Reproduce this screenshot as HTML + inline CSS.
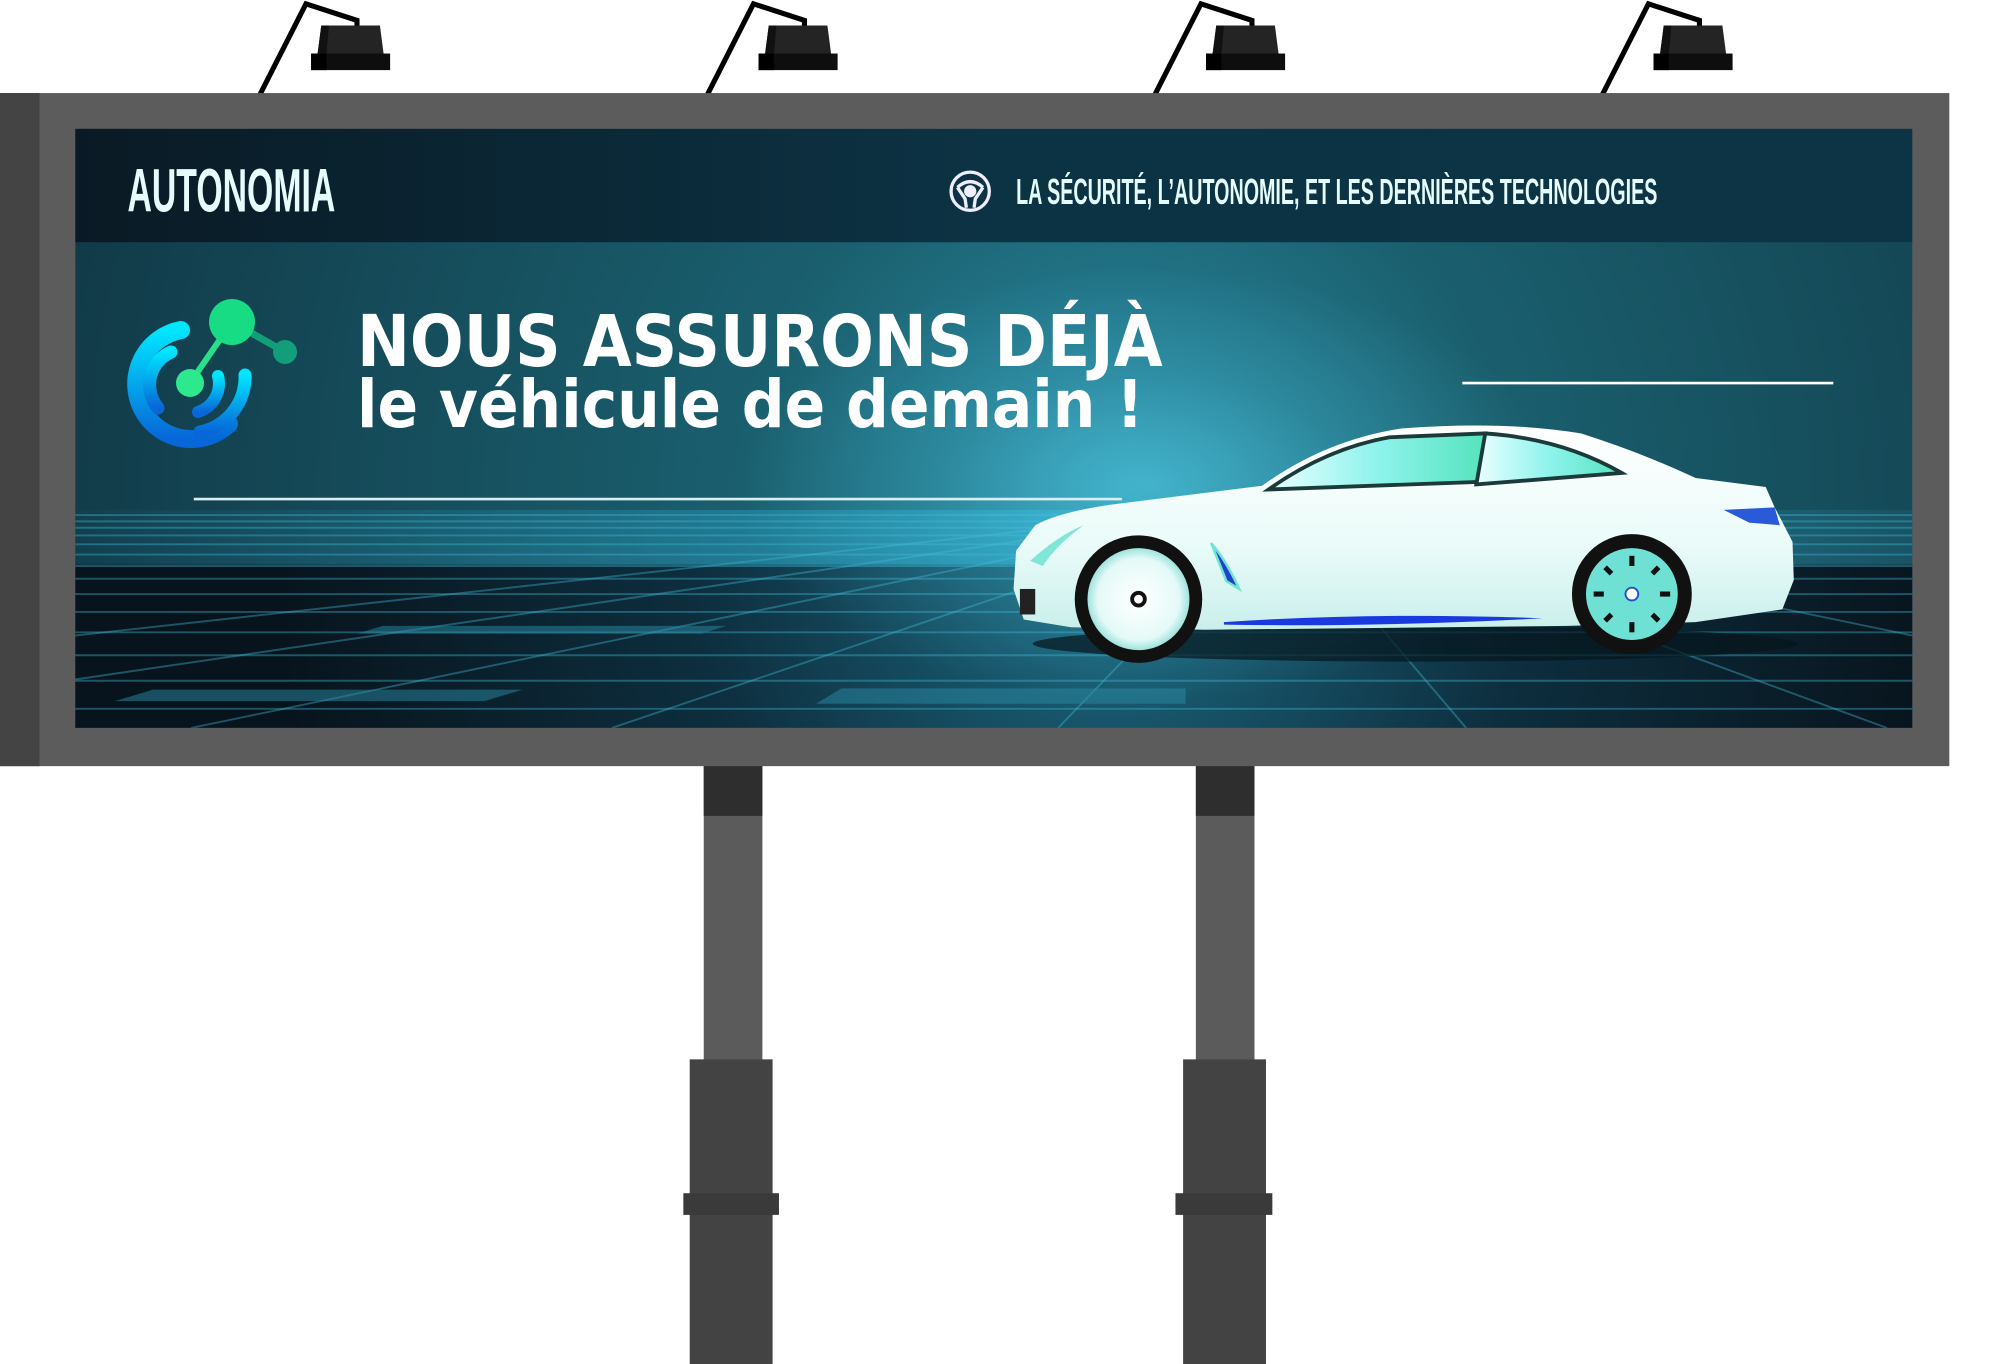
<!DOCTYPE html>
<html><head><meta charset="utf-8"><style>
html,body{margin:0;padding:0;background:#fff;width:1999px;height:1364px;overflow:hidden}
svg{display:block}
</style></head><body>
<svg width="1999" height="1364" viewBox="0 0 1999 1364" xmlns="http://www.w3.org/2000/svg">
<defs>
<linearGradient id="hdr" x1="0" y1="0" x2="1" y2="0"><stop offset="0" stop-color="#0a1a25"/><stop offset="0.5" stop-color="#0c3344"/><stop offset="1" stop-color="#0d3444"/></linearGradient>
<radialGradient id="sky" cx="880" cy="390" r="850" gradientUnits="userSpaceOnUse"><stop offset="0" stop-color="#2a8ca4"/><stop offset="0.35" stop-color="#1a5f6e"/><stop offset="1" stop-color="#113a48"/></radialGradient>
<linearGradient id="floorU" x1="0" y1="0" x2="1" y2="0"><stop offset="0" stop-color="#123f4e"/><stop offset="0.55" stop-color="#2aa0c0"/><stop offset="1" stop-color="#1a5566"/></linearGradient>
<radialGradient id="floorD" cx="870" cy="450" r="650" gradientUnits="userSpaceOnUse"><stop offset="0" stop-color="#1d6a82"/><stop offset="0.5" stop-color="#0d2e3e"/><stop offset="1" stop-color="#08141d"/></radialGradient>
<radialGradient id="glow" cx="0.5" cy="0.5" r="0.5"><stop offset="0" stop-color="#57d4ee" stop-opacity="0.55"/><stop offset="0.5" stop-color="#57d4ee" stop-opacity="0.2"/><stop offset="1" stop-color="#57d4ee" stop-opacity="0"/></radialGradient>
<linearGradient id="blueg" x1="0" y1="0" x2="0" y2="1"><stop offset="0" stop-color="#00e6ff"/><stop offset="1" stop-color="#0766d8"/></linearGradient>
<linearGradient id="body" x1="0" y1="0" x2="0" y2="1"><stop offset="0" stop-color="#ffffff"/><stop offset="0.6" stop-color="#e9fbf9"/><stop offset="1" stop-color="#c9efeb"/></linearGradient>
<linearGradient id="win" x1="0" y1="0" x2="1" y2="0"><stop offset="0" stop-color="#e9ffff"/><stop offset="0.5" stop-color="#8ff3ec"/><stop offset="1" stop-color="#55e3bd"/></linearGradient>
<radialGradient id="rimF" cx="0.5" cy="0.5" r="0.5"><stop offset="0" stop-color="#ffffff"/><stop offset="0.8" stop-color="#e4faf8"/><stop offset="1" stop-color="#9fe3dc"/></radialGradient>
<clipPath id="scr"><rect x="59" y="101" width="1441" height="470"/></clipPath>
</defs>

<g transform="scale(1.2749,1.2748)">
  <g id="lamp">
    <polyline points="204,74 240,3 280,16 280,22" fill="none" stroke="#000" stroke-width="4"/>
    <polygon points="252,20 298,20 301,43 249,43" fill="#242424"/>
    <polygon points="252,20 258,20 256,43 249,43" fill="#111"/>
    <rect x="244" y="42" width="62" height="13" fill="#0e0e0e"/>
    <rect x="244" y="42" width="12" height="13" fill="#000"/>
  </g>
  <use href="#lamp" x="351"/>
  <use href="#lamp" x="702"/>
  <use href="#lamp" x="1053"/>

  <rect x="552" y="600" width="46" height="470" fill="#5b5b5b"/>
  <rect x="552" y="600" width="46" height="40" fill="#2e2e2e"/>
  <rect x="541" y="831" width="65" height="239" fill="#434343"/>
  <rect x="536" y="936" width="75" height="17" fill="#3a3a3a"/>
  <rect x="938" y="600" width="46" height="470" fill="#5b5b5b"/>
  <rect x="938" y="600" width="46" height="40" fill="#2e2e2e"/>
  <rect x="928" y="831" width="65" height="239" fill="#434343"/>
  <rect x="922" y="936" width="76" height="17" fill="#3a3a3a"/>

  <rect x="0" y="73" width="1529" height="528" fill="#5c5c5c"/>
  <rect x="0" y="73" width="31" height="528" fill="#444"/>

  <g clip-path="url(#scr)">
    <rect x="59" y="101" width="1441" height="470" fill="url(#sky)"/>
    <rect x="59" y="400" width="1441" height="44" fill="url(#floorU)" opacity="0.85"/>
    <rect x="59" y="443" width="1441" height="128" fill="url(#floorD)"/>
    <g stroke="#3fb6d2" stroke-opacity="0.4" stroke-width="1.5" fill="none">
      <line x1="59" y1="404" x2="1500" y2="404"/><line x1="59" y1="409" x2="1500" y2="409"/>
      <line x1="59" y1="414" x2="1500" y2="414"/><line x1="59" y1="420" x2="1500" y2="420"/>
      <line x1="59" y1="427" x2="1500" y2="427"/><line x1="59" y1="435" x2="1500" y2="435"/>
      <line x1="59" y1="444" x2="1500" y2="444"/><line x1="59" y1="454" x2="1500" y2="454"/>
      <line x1="59" y1="466" x2="1500" y2="466"/><line x1="59" y1="480" x2="1500" y2="480"/>
      <line x1="59" y1="496" x2="1500" y2="496"/><line x1="59" y1="514" x2="1500" y2="514"/>
      <line x1="59" y1="534" x2="1500" y2="534"/><line x1="59" y1="556" x2="1500" y2="556"/>
      <line x1="1000" y1="395" x2="-600" y2="571"/><line x1="1000" y1="395" x2="-200" y2="571"/>
      <line x1="1000" y1="395" x2="150" y2="571"/><line x1="1000" y1="395" x2="480" y2="571"/>
      <line x1="1000" y1="395" x2="830" y2="571"/><line x1="1000" y1="395" x2="1150" y2="571"/>
      <line x1="1000" y1="395" x2="1480" y2="571"/><line x1="1000" y1="395" x2="1850" y2="571"/>
    </g>
    <g fill="#2a8aa4" opacity="0.5">
      <polygon points="120,541 410,541 380,550 90,550"/>
      <polygon points="300,491 570,491 550,497 280,497"/>
      <polygon points="660,540 930,540 930,552 640,552"/>
    </g>
    <rect x="59" y="101" width="1441" height="89" fill="url(#hdr)"/>
    <ellipse cx="900" cy="380" rx="320" ry="170" fill="url(#glow)"/>
  </g>

  <text x="100" y="166" font-family="'Liberation Sans Narrow','Liberation Sans',sans-serif" font-weight="bold" font-size="48" fill="#e6fbfb" textLength="163" lengthAdjust="spacingAndGlyphs">AUTONOMIA</text>
  <g transform="translate(761,150)" fill="none" stroke="#eef" stroke-width="2.6">
    <circle r="15"/>
    <path d="M-10,-3 Q0,-12 10,-3 M-10,-3 L-4,6 L-3,13 M10,-3 L4,6 L3,13"/>
    <circle cy="0" r="3.5" fill="#eef"/>
  </g>
  <text x="797" y="160" font-family="'Liberation Sans Narrow','Liberation Sans',sans-serif" font-weight="bold" font-size="28" fill="#e6fbfb" textLength="503" lengthAdjust="spacingAndGlyphs">LA SÉCURITÉ, L’AUTONOMIE, ET LES DERNIÈRES TECHNOLOGIES</text>

  <text x="280" y="287" font-family="'DejaVu Sans','Liberation Sans',sans-serif" font-weight="bold" font-size="56" fill="#fff" textLength="632" lengthAdjust="spacingAndGlyphs">NOUS ASSURONS DÉJÀ</text>
  <text x="280" y="335" font-family="'DejaVu Sans','Liberation Sans',sans-serif" font-weight="bold" font-size="52" fill="#fff" textLength="617" lengthAdjust="spacingAndGlyphs">le véhicule de demain !</text>

  <line x1="152" y1="391.5" x2="880" y2="391.5" stroke="#d8eef0" stroke-width="2"/>
  <line x1="1147" y1="300.5" x2="1438" y2="300.5" stroke="#ffffff" stroke-width="2"/>

  <ellipse cx="1110" cy="505" rx="300" ry="14" fill="#05151c" opacity="0.7"/>
  <path d="M803,486 L795,462 L797,432 L812,412 Q830,402 870,396 L990,381 Q1040,345 1100,336 Q1180,330 1240,340 Q1290,356 1330,375 L1385,382 L1392,398 L1406,425 L1407,455 L1398,478 L1330,488 L1230,491 L945,494 L840,492 Z" fill="url(#body)"/>
  <path d="M995,384 Q1040,352 1090,343 L1165,340 L1160,378 Z" fill="url(#win)" stroke="#1c3a3a" stroke-width="3"/>
  <path d="M1165,340 Q1225,344 1272,371 L1158,380 Z" fill="url(#win)" stroke="#1c3a3a" stroke-width="3"/>
  <path d="M1352,400 L1392,398 L1396,412 L1372,410 Z" fill="#2a5ad8"/>
  <path d="M950,426 Q962,440 972,462 L962,456 Z" fill="#2440d0" stroke="#6fe6d0" stroke-width="2"/>
  <path d="M960,488 Q1080,480 1210,485 Q1080,492 960,490 Z" fill="#1a3ae0"/>
  <path d="M808,440 Q830,420 850,412 Q828,428 818,444 Z" fill="#7fe6d8"/>
  <rect x="800" y="462" width="12" height="20" fill="#222"/>
  <circle cx="893" cy="470" r="50" fill="#111"/>
  <circle cx="893" cy="470" r="40" fill="url(#rimF)"/>
  <circle cx="893" cy="470" r="5" fill="none" stroke="#111" stroke-width="3"/>
  <circle cx="1280" cy="466" r="47" fill="#111"/>
  <circle cx="1280" cy="466" r="36" fill="#6fe0d4"/>
  <g stroke="#111" stroke-width="4">
    <line x1="1280" y1="436" x2="1280" y2="444"/><line x1="1280" y1="488" x2="1280" y2="496"/>
    <line x1="1250" y1="466" x2="1258" y2="466"/><line x1="1302" y1="466" x2="1310" y2="466"/>
    <line x1="1259" y1="445" x2="1264" y2="450"/><line x1="1296" y1="482" x2="1301" y2="487"/>
    <line x1="1301" y1="445" x2="1296" y2="450"/><line x1="1264" y1="482" x2="1259" y2="487"/>
  </g>
  <circle cx="1280" cy="466" r="5" fill="#fff" stroke="#2250d0" stroke-width="1.5"/>
</g>

<g fill="none" stroke="url(#blueg)" stroke-linecap="round">
  <path d="M181,330 A55,55 0 1 0 229,424" stroke-width="18"/>
  <path d="M171,352 A36,36 0 0 0 158,408" stroke-width="13"/>
  <path d="M245,375 A56,56 0 0 1 200,432" stroke-width="13"/>
  <path d="M218,376 A30,30 0 0 1 198,412" stroke-width="12"/>
</g>
<g>
  <line x1="232" y1="322" x2="285" y2="352" stroke="#149e78" stroke-width="7"/>
  <line x1="232" y1="322" x2="190" y2="383" stroke="#27e08a" stroke-width="6"/>
  <circle cx="232" cy="322" r="23" fill="#17dc84"/>
  <circle cx="285" cy="352" r="12" fill="#129e7a"/>
  <circle cx="190" cy="383" r="14" fill="#2ee88e"/>
</g>
</svg>
</body></html>
